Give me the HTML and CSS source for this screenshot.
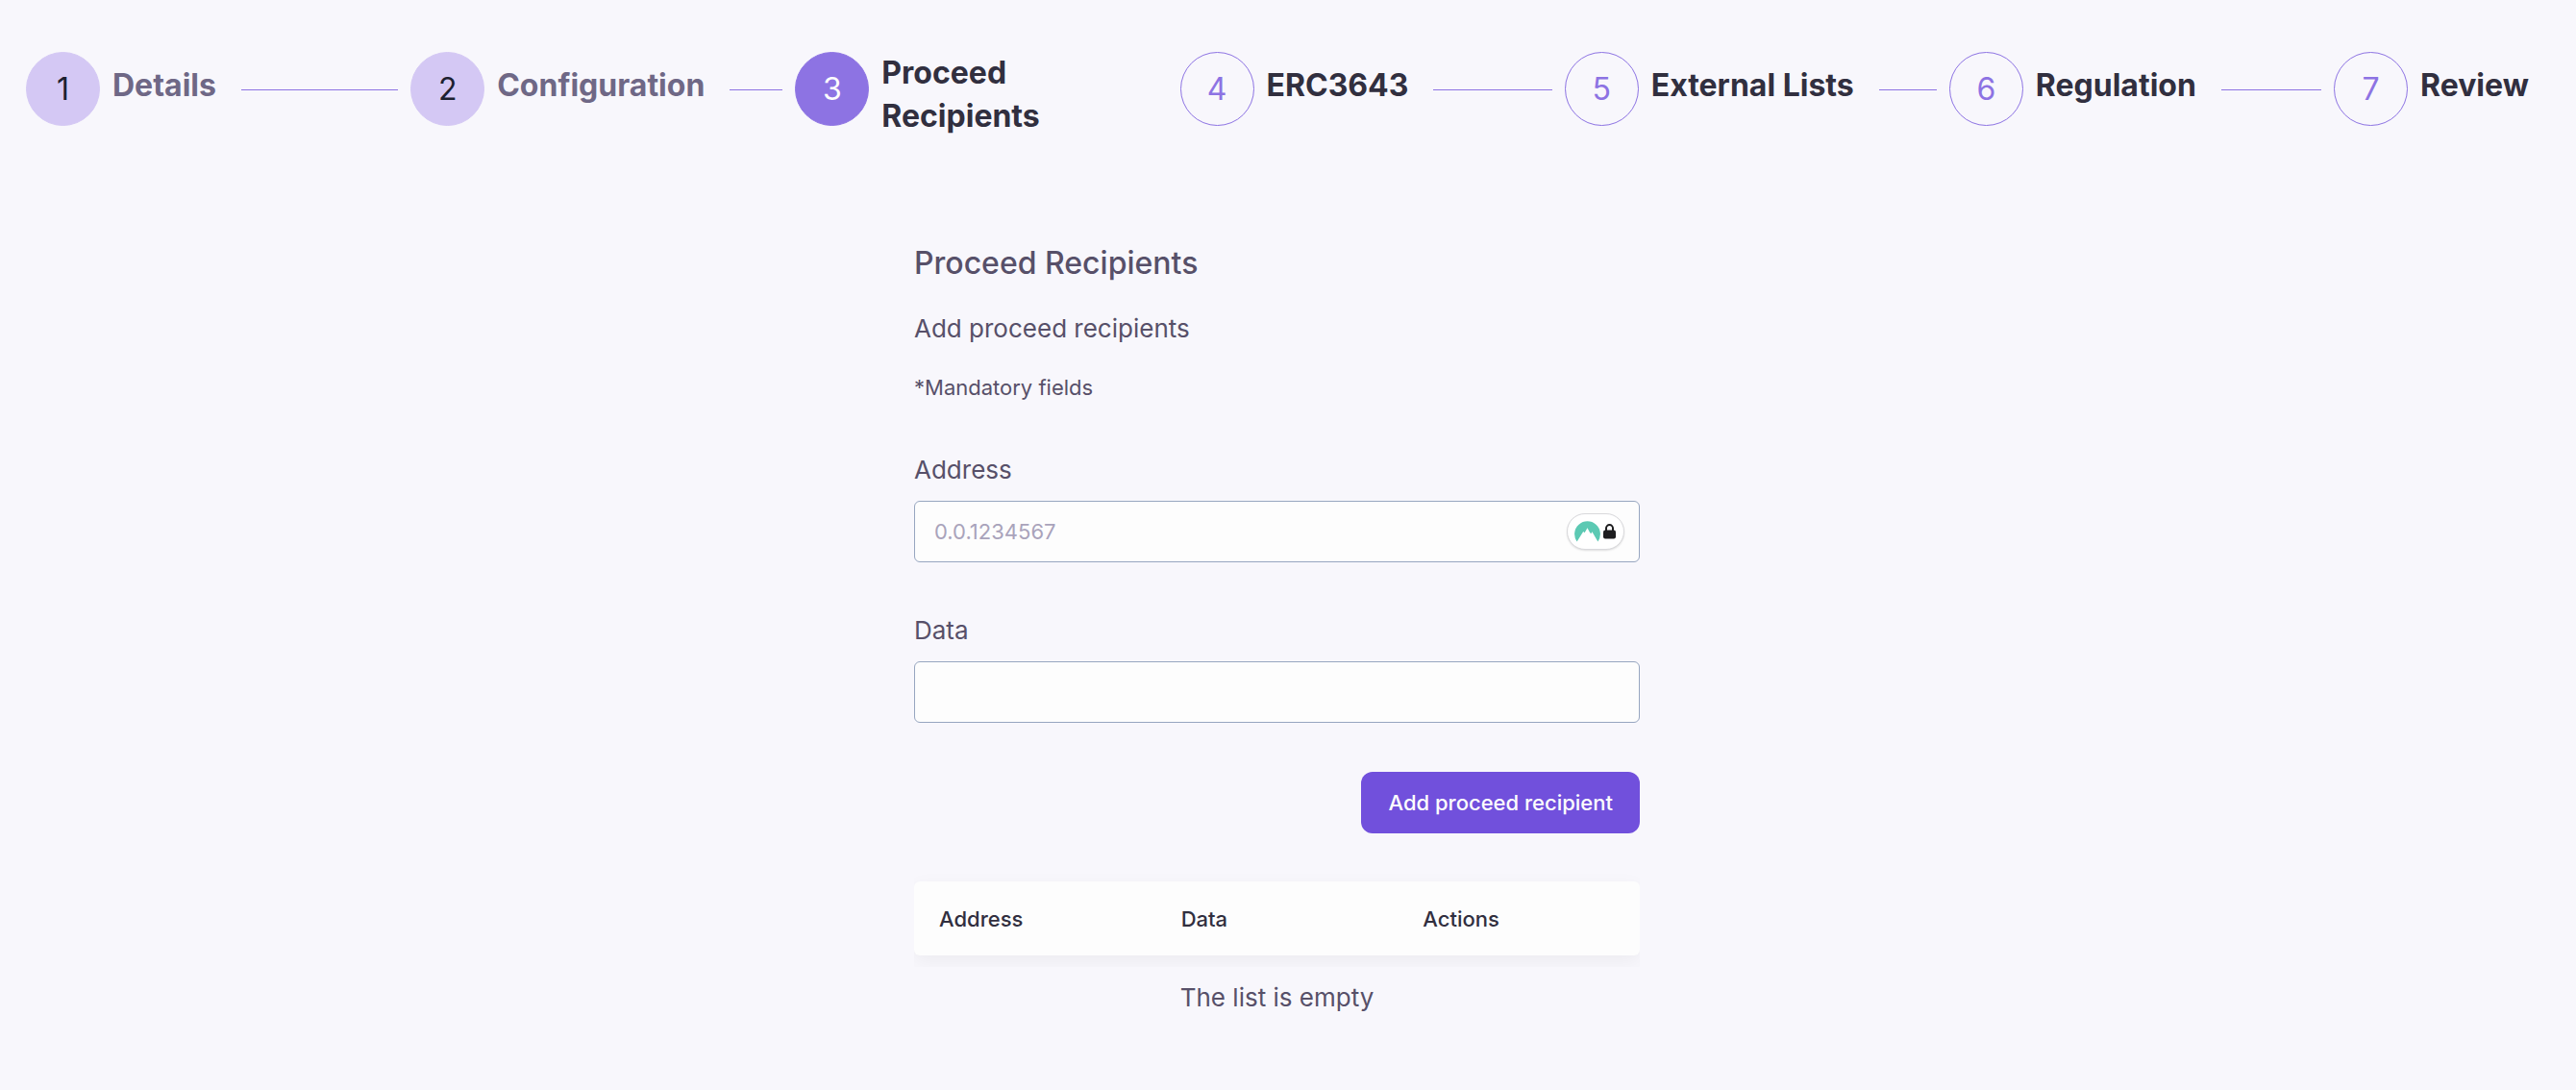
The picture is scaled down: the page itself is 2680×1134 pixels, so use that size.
FILE: index.html
```html
<!DOCTYPE html>
<html lang="en">
<head>
<meta charset="utf-8">
<meta name="viewport" content="width=device-width, initial-scale=1">
<title>Proceed Recipients</title>
<link rel="stylesheet" href="styles.css">
</head>
<body>
<ol class="stepper">
  <li class="step step--done"><span class="step-number">1</span><span class="step-title">Details</span><span class="step-line"></span></li>
  <li class="step step--done"><span class="step-number">2</span><span class="step-title">Configuration</span><span class="step-line"></span></li>
  <li class="step step--active" aria-current="step"><span class="step-number">3</span><span class="step-title step-title--wrap">Proceed Recipients</span></li>
  <li class="step"><span class="step-number">4</span><span class="step-title">ERC3643</span><span class="step-line"></span></li>
  <li class="step"><span class="step-number">5</span><span class="step-title">External Lists</span><span class="step-line"></span></li>
  <li class="step"><span class="step-number">6</span><span class="step-title">Regulation</span><span class="step-line"></span></li>
  <li class="step"><span class="step-number">7</span><span class="step-title">Review</span></li>
</ol>
<main class="content">
  <form class="form">
    <h1 class="heading">Proceed Recipients</h1>
    <p class="intro">Add proceed recipients</p>
    <p class="hint">*Mandatory fields</p>
    <div class="field">
      <label class="label" for="address">Address</label>
      <div class="control">
        <input class="input" id="address" type="text" placeholder="0.0.1234567">
        <span class="vault" aria-hidden="true">
          <svg class="vault-mountain" viewBox="0 0 27 22"><path fill="#5cc9b3" d="M2.6 21.5A13.4 13.4 0 1 1 24.4 21.5L18.4 11.2 17.3 13.2 16 11.9 13.5 7.2 10.6 12.3 9.2 11.1z"/></svg>
          <svg class="vault-lock" viewBox="0 0 13 16"><path fill="none" stroke="#1d1d1f" stroke-width="2" d="M3 8V4.6a3.5 3.5 0 0 1 7 0V8"/><rect y="6.5" width="13" height="9" rx="2" fill="#1d1d1f"/></svg>
        </span>
      </div>
    </div>
    <div class="field">
      <label class="label" for="data">Data</label>
      <input class="input" id="data" type="text">
    </div>
    <button class="submit" type="button">Add proceed recipient</button>
    <div class="table-wrap">
      <table class="table">
        <thead><tr><th>Address</th><th>Data</th><th>Actions</th></tr></thead>
      </table>
    </div>
    <p class="empty">The list is empty</p>
  </form>
</main>
</body>
</html>
```
FILE: styles.css
```css
* { box-sizing: border-box; }

body {
  margin: 0;
  background: #f8f7fc;
  color: #575069;
  font-family: Inter, "Liberation Sans", sans-serif;
}

.stepper {
  display: flex;
  gap: 13px;
  margin: 0;
  padding: 47px 27px 0;
  list-style: none;
}

.step {
  display: flex;
  flex: 1 1 0;
  align-items: center;
  gap: 13px;
  min-width: 0;
  height: 91px;
}

.step:last-child { flex: 0 0 225px; }

.step-number {
  display: flex;
  flex: none;
  align-items: center;
  justify-content: center;
  width: 77px;
  height: 77px;
  border: 1px solid #8d73e3;
  border-radius: 50%;
  color: #8d73e3;
  font-size: 32px;
}

.step--done .step-number {
  border-color: #d4c8f4;
  background: #d4c8f4;
  color: #1d2130;
}

.step--active .step-number {
  background: #8d73e3;
  color: #fdfdfd;
}

.step-title {
  padding: 0 13px 8px 0;
  color: #312f3f;
  font-size: 32px;
  font-weight: 700;
  line-height: 45px;
}

.step-title--wrap { padding: 11px 13px 0 0; }

.step--done .step-title { color: #6f6886; }

.step-line {
  flex: 1;
  height: 1px;
  margin-top: 2px;
  background: #8d73e3;
}

.content {
  display: flex;
  justify-content: center;
  padding: 116px 50px 48px 27px;
}

.form {
  display: flex;
  flex-direction: column;
  width: 100%;
  max-width: 755px;
}

.heading {
  margin: 0;
  font-size: 32px;
  font-weight: 500;
  line-height: 40px;
}

.intro {
  margin: 29px 0 25px;
  font-size: 26px;
  line-height: 38px;
}

.hint {
  margin: 0;
  font-size: 22px;
  line-height: 34px;
}

.field {
  display: flex;
  flex-direction: column;
  gap: 13px;
  margin-top: 50px;
}

.field + .field { margin-top: 52px; }

.label {
  font-size: 26px;
  line-height: 38px;
}

.control { position: relative; }

.input {
  width: 100%;
  height: 64px;
  padding: 0 20px;
  border: 1px solid #97a6c0;
  border-radius: 6px;
  background: #fdfdfd;
  color: #312f3f;
  font: inherit;
  font-size: 22px;
}

.input::placeholder { color: #a9a3bb; opacity: 1; }

.vault {
  position: absolute;
  top: 13px;
  right: 16px;
  display: flex;
  align-items: center;
  gap: 3px;
  width: 60px;
  height: 38px;
  padding: 0 7px;
  border: 1px solid #d9d9dc;
  border-radius: 19px;
  background: #fff;
  box-shadow: 0 1px 2px rgba(0, 0, 0, 0.12);
}

.vault-mountain { width: 27px; height: 22px; }
.vault-lock { width: 13px; height: 16px; }

.submit {
  align-self: flex-end;
  height: 64px;
  margin: 51px 0 37px;
  padding: 0 28px;
  border: 0;
  border-radius: 12px;
  background: #7150dc;
  color: #fdfdfd;
  font: inherit;
  font-size: 22px;
  font-weight: 500;
}

.table-wrap {
  overflow: hidden;
  padding: 13px 0 12px;
}

.table {
  width: 100%;
  border-spacing: 0;
  border-radius: 6px;
  background: #fdfdfd;
  box-shadow: 0 6px 20px rgba(0, 0, 0, 0.05);
  table-layout: fixed;
}

.table th {
  height: 77px;
  padding: 0 26px;
  color: #312f3f;
  font-size: 22px;
  font-weight: 500;
  text-align: left;
}

.empty {
  margin: 13px 0 0;
  font-size: 26px;
  line-height: 38px;
  text-align: center;
}
```
